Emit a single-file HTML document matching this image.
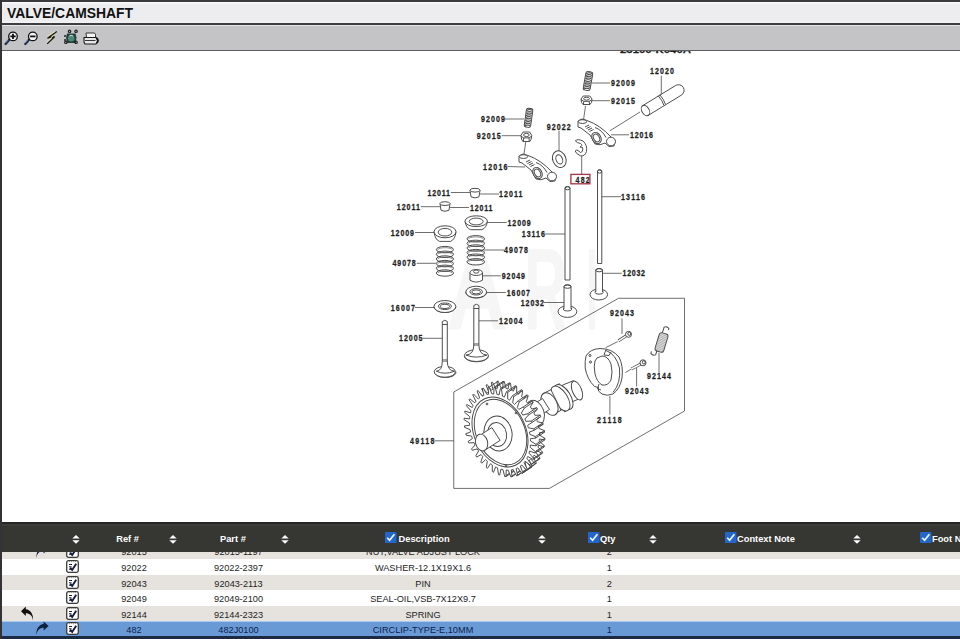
<!DOCTYPE html>
<html><head><meta charset="utf-8">
<style>
*{margin:0;padding:0;box-sizing:border-box}
html,body{width:960px;height:639px;overflow:hidden;background:#fff;font-family:"Liberation Sans",sans-serif}
.abs{position:absolute}
#topb{left:0;top:0;width:960px;height:2px;background:#3a3a3e}
#leftb{left:0;top:0;width:2px;height:639px;background:#333335}
#title{left:2px;top:2px;width:958px;height:21px;background:linear-gradient(#fbfbfc 0,#fbfbfc 1px,#ececee 2px,#ededf0 18px,#f4f4f6 21px)}
#title span{position:absolute;left:5px;top:3px;font-weight:bold;font-size:13.9px;color:#111;letter-spacing:0}
#tline{left:2px;top:23px;width:958px;height:1.6px;background:#3e3e40}
#tline2{left:2px;top:24.6px;width:958px;height:1px;background:#e8e8ea}
#tool{left:2px;top:25.5px;width:958px;height:24px;background:#c4c3c5}
#bline{left:2px;top:49.5px;width:958px;height:1.3px;background:#5e5e60}
#diag{left:2px;top:51px;width:958px;height:471px;background:#fff}
#thl{left:2px;top:522.3px;width:958px;height:2px;background:#262626}
#thl2{left:2px;top:524.3px;width:958px;height:2px;background:#3c3c3a}
#th{left:2px;top:526.3px;width:958px;height:25.5px;background:#363633;color:#fff;font-weight:bold;font-size:9.3px}
.hd{position:absolute;top:7.6px;white-space:nowrap}
.sort{position:absolute;top:8.5px;width:8px;height:9px}
.cb{position:absolute;top:5.5px;width:11.5px;height:11.5px}
#rows{left:2px;top:551.8px;width:958px;height:84px;overflow:hidden}
.row{position:absolute;left:0;width:958px;height:15.5px;font-size:9.2px;color:#1e1e1e}
.c{position:absolute;top:4px;white-space:nowrap;transform:translateX(-50%)}
.chk{position:absolute;left:64px;top:1.2px;width:13px;height:13px}
.arr{position:absolute;top:0;width:16px;height:15px}
#botl{left:2px;top:635.7px;width:958px;height:3.3px;background:#1d2a44}
#dsvg{left:0;top:0}
.lb{font-family:"Liberation Sans",sans-serif;font-weight:bold;font-size:8.2px;fill:#1e1e1e;stroke:#1e1e1e;stroke-width:0.25}
.ln{stroke:#4a4a4a;stroke-width:0.8;fill:none}
.pt{stroke:#454545;stroke-width:0.95}
.thk{stroke:#4a4a4a;stroke-width:3.0;fill:none}
.thn{stroke:#fff;stroke-width:1.5;fill:none}
</style></head><body>
<div class="abs" id="diag"></div>
<svg class="abs" id="dsvg" width="960" height="639" viewBox="0 0 960 639"><defs><clipPath id="dc"><rect x="2" y="51" width="958" height="471"/></clipPath></defs><g clip-path="url(#dc)"><g fill="#f6f6f6" font-family="Liberation Sans" font-weight="bold" font-size="116"><text x="446" y="330" textLength="62" lengthAdjust="spacingAndGlyphs">A</text><text x="524" y="330" textLength="43" lengthAdjust="spacingAndGlyphs">R</text><text x="586" y="330" textLength="12" lengthAdjust="spacingAndGlyphs">I</text></g>
<text x="620" y="52.6" textLength="71" lengthAdjust="spacingAndGlyphs" font-size="9" class="lb">23100-K040A</text>
<text transform="translate(650.00 73.90) scale(0.86 1)" x="0" y="0" textLength="27.91" lengthAdjust="spacing" class="lb">12020</text>
<text transform="translate(611.00 86.10) scale(0.86 1)" x="0" y="0" textLength="27.91" lengthAdjust="spacing" class="lb">92009</text>
<text transform="translate(611.00 103.80) scale(0.86 1)" x="0" y="0" textLength="27.91" lengthAdjust="spacing" class="lb">92015</text>
<text transform="translate(630.00 137.90) scale(0.86 1)" x="0" y="0" textLength="26.74" lengthAdjust="spacing" class="lb">12016</text>
<text transform="translate(481.00 122.10) scale(0.86 1)" x="0" y="0" textLength="27.91" lengthAdjust="spacing" class="lb">92009</text>
<text transform="translate(476.70 138.80) scale(0.86 1)" x="0" y="0" textLength="28.02" lengthAdjust="spacing" class="lb">92015</text>
<text transform="translate(546.70 129.60) scale(0.86 1)" x="0" y="0" textLength="28.02" lengthAdjust="spacing" class="lb">92022</text>
<text transform="translate(483.00 169.60) scale(0.86 1)" x="0" y="0" textLength="28.49" lengthAdjust="spacing" class="lb">12016</text>
<text transform="translate(427.50 195.60) scale(0.86 1)" x="0" y="0" textLength="26.16" lengthAdjust="spacing" class="lb">12011</text>
<text transform="translate(499.00 197.10) scale(0.86 1)" x="0" y="0" textLength="27.33" lengthAdjust="spacing" class="lb">12011</text>
<text transform="translate(396.70 209.80) scale(0.86 1)" x="0" y="0" textLength="27.09" lengthAdjust="spacing" class="lb">12011</text>
<text transform="translate(470.00 210.60) scale(0.86 1)" x="0" y="0" textLength="26.16" lengthAdjust="spacing" class="lb">12011</text>
<text transform="translate(621.00 199.80) scale(0.86 1)" x="0" y="0" textLength="27.91" lengthAdjust="spacing" class="lb">13116</text>
<text transform="translate(507.50 225.60) scale(0.86 1)" x="0" y="0" textLength="27.09" lengthAdjust="spacing" class="lb">12009</text>
<text transform="translate(390.80 235.60) scale(0.86 1)" x="0" y="0" textLength="26.98" lengthAdjust="spacing" class="lb">12009</text>
<text transform="translate(521.70 237.10) scale(0.86 1)" x="0" y="0" textLength="27.09" lengthAdjust="spacing" class="lb">13116</text>
<text transform="translate(504.00 253.10) scale(0.86 1)" x="0" y="0" textLength="27.91" lengthAdjust="spacing" class="lb">49078</text>
<text transform="translate(392.50 266.40) scale(0.86 1)" x="0" y="0" textLength="27.09" lengthAdjust="spacing" class="lb">49078</text>
<text transform="translate(622.50 276.40) scale(0.86 1)" x="0" y="0" textLength="26.16" lengthAdjust="spacing" class="lb">12032</text>
<text transform="translate(501.70 278.90) scale(0.86 1)" x="0" y="0" textLength="27.09" lengthAdjust="spacing" class="lb">92049</text>
<text transform="translate(506.70 295.60) scale(0.86 1)" x="0" y="0" textLength="27.09" lengthAdjust="spacing" class="lb">16007</text>
<text transform="translate(520.80 305.60) scale(0.86 1)" x="0" y="0" textLength="26.98" lengthAdjust="spacing" class="lb">12032</text>
<text transform="translate(390.80 310.60) scale(0.86 1)" x="0" y="0" textLength="28.14" lengthAdjust="spacing" class="lb">16007</text>
<text transform="translate(610.00 316.30) scale(0.86 1)" x="0" y="0" textLength="27.91" lengthAdjust="spacing" class="lb">92043</text>
<text transform="translate(499.00 323.90) scale(0.86 1)" x="0" y="0" textLength="27.33" lengthAdjust="spacing" class="lb">12004</text>
<text transform="translate(399.00 341.40) scale(0.86 1)" x="0" y="0" textLength="27.33" lengthAdjust="spacing" class="lb">12005</text>
<text transform="translate(647.00 379.10) scale(0.86 1)" x="0" y="0" textLength="27.91" lengthAdjust="spacing" class="lb">92144</text>
<text transform="translate(625.00 393.80) scale(0.86 1)" x="0" y="0" textLength="27.44" lengthAdjust="spacing" class="lb">92043</text>
<text transform="translate(597.00 422.50) scale(0.86 1)" x="0" y="0" textLength="28.72" lengthAdjust="spacing" class="lb">21118</text>
<text transform="translate(410.00 443.90) scale(0.86 1)" x="0" y="0" textLength="28.37" lengthAdjust="spacing" class="lb">49118</text>
<text transform="translate(575.50 182.90) scale(0.86 1)" x="0" y="0" textLength="16.63" lengthAdjust="spacing" class="lb">482</text>
<line x1="661.3" y1="75.7" x2="661.3" y2="96.5" class="ln"/>
<line x1="592.0" y1="83.0" x2="610.0" y2="83.0" class="ln"/>
<line x1="592.0" y1="100.7" x2="610.0" y2="100.7" class="ln"/>
<line x1="611.0" y1="134.8" x2="629.0" y2="134.8" class="ln"/>
<line x1="640.0" y1="112.0" x2="610.0" y2="130.7" class="ln"/>
<line x1="505.0" y1="119.0" x2="524.0" y2="119.0" class="ln"/>
<line x1="501.7" y1="135.7" x2="521.0" y2="135.7" class="ln"/>
<line x1="559.0" y1="130.7" x2="559.0" y2="151.5" class="ln"/>
<line x1="507.5" y1="166.5" x2="525.0" y2="167.0" class="ln"/>
<line x1="585.5" y1="106.0" x2="583.5" y2="120.0" class="ln"/>
<line x1="525.8" y1="141.5" x2="524.0" y2="154.0" class="ln"/>
<line x1="581.7" y1="155.7" x2="581.7" y2="174.0" class="ln"/>
<line x1="450.8" y1="192.5" x2="470.0" y2="192.5" class="ln"/>
<line x1="480.0" y1="194.0" x2="499.0" y2="194.0" class="ln"/>
<line x1="420.8" y1="206.7" x2="440.0" y2="206.7" class="ln"/>
<line x1="450.0" y1="207.5" x2="469.0" y2="207.5" class="ln"/>
<line x1="601.7" y1="196.7" x2="621.0" y2="196.7" class="ln"/>
<line x1="545.0" y1="234.0" x2="565.0" y2="234.0" class="ln"/>
<line x1="487.5" y1="222.5" x2="506.7" y2="222.5" class="ln"/>
<line x1="415.0" y1="232.5" x2="434.0" y2="232.5" class="ln"/>
<line x1="484.0" y1="250.0" x2="504.0" y2="250.0" class="ln"/>
<line x1="416.7" y1="263.3" x2="435.8" y2="263.3" class="ln"/>
<line x1="602.5" y1="273.3" x2="621.7" y2="273.3" class="ln"/>
<line x1="482.5" y1="275.8" x2="500.8" y2="275.8" class="ln"/>
<line x1="486.7" y1="292.5" x2="505.8" y2="292.5" class="ln"/>
<line x1="544.0" y1="302.5" x2="564.0" y2="302.5" class="ln"/>
<line x1="415.0" y1="307.5" x2="434.0" y2="307.5" class="ln"/>
<line x1="479.0" y1="320.8" x2="498.0" y2="320.8" class="ln"/>
<line x1="422.5" y1="338.3" x2="442.0" y2="338.3" class="ln"/>
<line x1="622.0" y1="318.4" x2="622.0" y2="334.0" class="ln"/>
<line x1="617.7" y1="341.6" x2="605.6" y2="347.7" class="ln"/>
<line x1="659.0" y1="352.8" x2="659.0" y2="372.6" class="ln"/>
<line x1="636.6" y1="367.5" x2="636.6" y2="386.4" class="ln"/>
<line x1="625.4" y1="372.6" x2="631.4" y2="369.0" class="ln"/>
<line x1="609.9" y1="396.0" x2="609.9" y2="414.7" class="ln"/>
<line x1="434.4" y1="440.8" x2="453.8" y2="440.8" class="ln"/>
<path d="M618.5,298.3 L684.5,298.3 L684.5,411 L549.4,488.4 L453.75,488.4 L453.75,392 Z" fill="none" class="ln"/>
<rect x="570.9" y="174.4" width="19.0" height="9.4" fill="none" stroke="#a53a4a" stroke-width="1.35"/>
<g transform="rotate(10 588.0 81.0)"><rect x="584.5" y="71.5" width="7.0" height="19.0" rx="2.3" fill="#f4f4f4" class="pt"/><path d="M585.0,74.2 Q588.0,71.7 591.0,73.2" class="pt" fill="none"/><path d="M585.0,76.0 Q588.0,73.5 591.0,75.0" class="pt" fill="none"/><path d="M585.0,77.7 Q588.0,75.2 591.0,76.7" class="pt" fill="none"/><path d="M585.0,79.4 Q588.0,76.9 591.0,78.4" class="pt" fill="none"/><path d="M585.0,81.1 Q588.0,78.6 591.0,80.1" class="pt" fill="none"/><path d="M585.0,82.9 Q588.0,80.4 591.0,81.9" class="pt" fill="none"/><path d="M585.0,84.6 Q588.0,82.1 591.0,83.6" class="pt" fill="none"/><path d="M585.0,86.3 Q588.0,83.8 591.0,85.3" class="pt" fill="none"/><path d="M585.0,88.0 Q588.0,85.5 591.0,87.0" class="pt" fill="none"/><path d="M585.0,89.8 Q588.0,87.3 591.0,88.8" class="pt" fill="none"/></g>
<g transform="rotate(8 528.5 117.8)"><rect x="525.3" y="108.3" width="6.5" height="19.0" rx="2.2" fill="#f4f4f4" class="pt"/><path d="M525.8,111.0 Q528.5,108.5 531.3,110.0" class="pt" fill="none"/><path d="M525.8,112.8 Q528.5,110.3 531.3,111.8" class="pt" fill="none"/><path d="M525.8,114.5 Q528.5,112.0 531.3,113.5" class="pt" fill="none"/><path d="M525.8,116.2 Q528.5,113.7 531.3,115.2" class="pt" fill="none"/><path d="M525.8,117.9 Q528.5,115.4 531.3,116.9" class="pt" fill="none"/><path d="M525.8,119.7 Q528.5,117.2 531.3,118.7" class="pt" fill="none"/><path d="M525.8,121.4 Q528.5,118.9 531.3,120.4" class="pt" fill="none"/><path d="M525.8,123.1 Q528.5,120.6 531.3,122.1" class="pt" fill="none"/><path d="M525.8,124.8 Q528.5,122.3 531.3,123.8" class="pt" fill="none"/><path d="M525.8,126.6 Q528.5,124.1 531.3,125.6" class="pt" fill="none"/></g>
<path d="M467.5,238.8 L467.5,261.8 A8.8,3.2 0 0 0 484.1,261.8 L484.1,238.8 Z" fill="#fff" stroke="none"/><ellipse cx="475.8" cy="238.8" rx="8.8" ry="3.2" fill="none" class="pt"/><path d="M468.6,238.8 A7.2,1.9 0 0 1 483.0,238.8" fill="none" class="pt" style="stroke:#5a5a5a;stroke-width:0.7"/><ellipse cx="475.8" cy="243.4" rx="8.8" ry="3.2" fill="none" class="pt"/><path d="M468.6,243.4 A7.2,1.9 0 0 1 483.0,243.4" fill="none" class="pt" style="stroke:#5a5a5a;stroke-width:0.7"/><ellipse cx="475.8" cy="248.0" rx="8.8" ry="3.2" fill="none" class="pt"/><path d="M468.6,248.0 A7.2,1.9 0 0 1 483.0,248.0" fill="none" class="pt" style="stroke:#5a5a5a;stroke-width:0.7"/><ellipse cx="475.8" cy="252.6" rx="8.8" ry="3.2" fill="none" class="pt"/><path d="M468.6,252.6 A7.2,1.9 0 0 1 483.0,252.6" fill="none" class="pt" style="stroke:#5a5a5a;stroke-width:0.7"/><ellipse cx="475.8" cy="257.2" rx="8.8" ry="3.2" fill="none" class="pt"/><path d="M468.6,257.2 A7.2,1.9 0 0 1 483.0,257.2" fill="none" class="pt" style="stroke:#5a5a5a;stroke-width:0.7"/><ellipse cx="475.8" cy="261.8" rx="8.8" ry="3.2" fill="none" class="pt"/><path d="M468.6,261.8 A7.2,1.9 0 0 1 483.0,261.8" fill="none" class="pt" style="stroke:#5a5a5a;stroke-width:0.7"/>
<path d="M436.8,249.6 L436.8,273.0 A8.6,3.2 0 0 0 453.0,273.0 L453.0,249.6 Z" fill="#fff" stroke="none"/><ellipse cx="444.9" cy="249.6" rx="8.6" ry="3.2" fill="none" class="pt"/><path d="M437.9,249.6 A7.0,1.9 0 0 1 451.9,249.6" fill="none" class="pt" style="stroke:#5a5a5a;stroke-width:0.7"/><ellipse cx="444.9" cy="254.3" rx="8.6" ry="3.2" fill="none" class="pt"/><path d="M437.9,254.3 A7.0,1.9 0 0 1 451.9,254.3" fill="none" class="pt" style="stroke:#5a5a5a;stroke-width:0.7"/><ellipse cx="444.9" cy="259.0" rx="8.6" ry="3.2" fill="none" class="pt"/><path d="M437.9,259.0 A7.0,1.9 0 0 1 451.9,259.0" fill="none" class="pt" style="stroke:#5a5a5a;stroke-width:0.7"/><ellipse cx="444.9" cy="263.6" rx="8.6" ry="3.2" fill="none" class="pt"/><path d="M437.9,263.6 A7.0,1.9 0 0 1 451.9,263.6" fill="none" class="pt" style="stroke:#5a5a5a;stroke-width:0.7"/><ellipse cx="444.9" cy="268.3" rx="8.6" ry="3.2" fill="none" class="pt"/><path d="M437.9,268.3 A7.0,1.9 0 0 1 451.9,268.3" fill="none" class="pt" style="stroke:#5a5a5a;stroke-width:0.7"/><ellipse cx="444.9" cy="273.0" rx="8.6" ry="3.2" fill="none" class="pt"/><path d="M437.9,273.0 A7.0,1.9 0 0 1 451.9,273.0" fill="none" class="pt" style="stroke:#5a5a5a;stroke-width:0.7"/>
<path d="M581.0,99.0 L583.2,96.0 L589.8,96.0 L592.0,99.0 L591.5,102.4 L590.0,104.5 L583.0,104.5 L581.5,102.4 Z" fill="#fff" class="pt"/>
<path d="M581.2,99.8 L583.8,101.3 L589.2,101.3 L591.8,99.8" fill="none" class="pt"/>
<line x1="583.8" y1="101.3" x2="583.4" y2="104.5" class="pt"/>
<line x1="589.2" y1="101.3" x2="589.6" y2="104.5" class="pt"/>
<ellipse cx="586.5" cy="98.7" rx="2.9" ry="1.4" fill="none" class="pt"/>
<path d="M521.0,135.3 L523.1,132.0 L529.6,132.0 L531.7,135.3 L531.2,139.1 L529.8,141.5 L522.9,141.5 L521.5,139.1 Z" fill="#fff" class="pt"/>
<path d="M521.2,136.3 L523.7,137.9 L529.0,137.9 L531.5,136.3" fill="none" class="pt"/>
<line x1="523.7" y1="137.9" x2="523.4" y2="141.5" class="pt"/>
<line x1="529.0" y1="137.9" x2="529.3" y2="141.5" class="pt"/>
<ellipse cx="526.4" cy="135.0" rx="2.8" ry="1.6" fill="none" class="pt"/>
<path d="M578.0,121.0 L582.0,119.0 L587.0,120.5 Q600.0,125.0 611.0,137.0 L615.0,141.0 L614.0,146.0 L609.0,146.5 L605.0,143.0 Q600.0,146.0 595.0,144.0 L590.0,135.0 L581.0,128.0 L578.0,127.0 Z" fill="#fff" class="pt"/>
<ellipse cx="596.5" cy="138.0" rx="4.3" ry="6" transform="rotate(-30 596.5 138.0)" fill="#fff" class="pt"/>
<ellipse cx="611.0" cy="141.5" rx="4.5" ry="4.3" fill="#fff" class="pt"/>
<ellipse cx="582.5" cy="121.6" rx="4.2" ry="1.9" fill="#fff" class="pt"/>
<path d="M595.0,127.5 Q602.0,130.0 606.0,137.5" fill="none" class="pt"/>
<ellipse cx="596.5" cy="138.0" rx="2.8" ry="4.2" transform="rotate(-30 596.5 138.0)" fill="none" class="pt"/>
<line x1="585.0" y1="127.0" x2="589.0" y2="125.0" class="pt"/>
<line x1="586.5" y1="128.5" x2="590.5" y2="126.5" class="pt"/>
<line x1="588.0" y1="130.0" x2="592.0" y2="128.0" class="pt"/>
<line x1="589.5" y1="131.5" x2="593.5" y2="129.5" class="pt"/>
<path d="M519.0,156.0 L523.0,154.0 L528.0,155.5 Q541.0,160.0 552.0,172.0 L556.0,176.0 L555.0,181.0 L550.0,181.5 L546.0,178.0 Q541.0,181.0 536.0,179.0 L531.0,170.0 L522.0,163.0 L519.0,162.0 Z" fill="#fff" class="pt"/>
<ellipse cx="537.5" cy="173.0" rx="4.3" ry="6" transform="rotate(-30 537.5 173.0)" fill="#fff" class="pt"/>
<ellipse cx="552.0" cy="176.5" rx="4.5" ry="4.3" fill="#fff" class="pt"/>
<ellipse cx="523.5" cy="156.6" rx="4.2" ry="1.9" fill="#fff" class="pt"/>
<path d="M536.0,162.5 Q543.0,165.0 547.0,172.5" fill="none" class="pt"/>
<ellipse cx="537.5" cy="173.0" rx="2.8" ry="4.2" transform="rotate(-30 537.5 173.0)" fill="none" class="pt"/>
<line x1="526.0" y1="162.0" x2="530.0" y2="160.0" class="pt"/>
<line x1="527.5" y1="163.5" x2="531.5" y2="161.5" class="pt"/>
<line x1="529.0" y1="165.0" x2="533.0" y2="163.0" class="pt"/>
<line x1="530.5" y1="166.5" x2="534.5" y2="164.5" class="pt"/>
<path d="M648.4,115.3 L681.4,95.1 A5.6,5.6 0 0 0 675.6,85.5 L642.6,105.7 Z" fill="#fff" class="pt"/>
<ellipse cx="645.5" cy="110.5" rx="3.6" ry="5.6" transform="rotate(-31.471684533627307 645.5 110.5)" fill="#fff" class="pt"/>
<path d="M663.9,105.3 Q662.5,100.5 658.1,95.7" fill="none" class="pt"/>
<path d="M665.5,104.3 Q664.0,99.5 659.7,94.7" fill="none" class="pt"/>
<ellipse cx="559.3" cy="159.2" rx="6.6" ry="8.6" transform="rotate(-22 559.3 159.2)" fill="#fff" class="pt"/>
<ellipse cx="559.3" cy="159.4" rx="3.2" ry="4.8" transform="rotate(-22 559.3 159.4)" fill="none" class="pt"/>
<path d="M575.3,140.8 Q578,138.5 583,141 Q587.5,145 586.5,151.5 Q585,156.5 580.5,155.8 Q576,154 575.2,151 Q576,149.5 578,150.5 L580.5,152.5 Q583,152 582.8,149 L582.5,147.5 L580,147 Q583.5,145.5 580.5,143.5 Q577,143 575.3,140.8 Z" fill="#fff" class="pt"/>
<path d="M597.5,263.5 L597.5,171.5 A2.1,1.8 0 0 1 601.8,171.5 L601.8,263.5 Z" fill="#fff" class="pt"/>
<ellipse cx="599.6" cy="171.6" rx="2.1" ry="1.5" transform="rotate(0 599.6 171.6)" fill="none" class="pt"/>
<path d="M565.0,280.0 L565.0,188.2 A2.5,1.8 0 0 1 570.0,188.2 L570.0,280.0 Z" fill="#fff" class="pt"/>
<ellipse cx="567.5" cy="188.3" rx="2.5" ry="1.5" transform="rotate(0 567.5 188.3)" fill="none" class="pt"/>
<ellipse cx="598.8" cy="294.5" rx="8.8" ry="5.5" transform="rotate(0 598.8 294.5)" fill="#fff" class="pt"/>
<ellipse cx="599.1" cy="292.2" rx="4.2" ry="2.0" transform="rotate(0 599.1 292.2)" fill="none" class="pt"/>
<path d="M595.8,292.0 L595.8,270.0 A3.4,1.8 0 0 1 602.5,270.0 L602.5,292.0" fill="#fff" class="pt"/>
<ellipse cx="599.1" cy="270.2" rx="3.4" ry="1.6" transform="rotate(0 599.1 270.2)" fill="none" class="pt"/>
<ellipse cx="567.4" cy="311.6" rx="9.4" ry="5.8" transform="rotate(0 567.4 311.6)" fill="#fff" class="pt"/>
<ellipse cx="567.5" cy="309.0" rx="4.3" ry="2.0" transform="rotate(0 567.5 309.0)" fill="none" class="pt"/>
<path d="M564.0,308.8 L564.0,286.5 A3.5,1.8 0 0 1 571.0,286.5 L571.0,308.8" fill="#fff" class="pt"/>
<ellipse cx="567.5" cy="286.7" rx="3.5" ry="1.6" transform="rotate(0 567.5 286.7)" fill="none" class="pt"/>
<path d="M470.0,190.1 L471.0,196.8 Q475.0,199.1 479.0,196.8 L480.0,190.1" fill="#fff" class="pt"/>
<ellipse cx="475.0" cy="190.2" rx="5.0" ry="1.9" transform="rotate(0 475.0 190.2)" fill="#fff" class="pt"/>
<path d="M440.0,203.5 L441.0,210.2 Q445.0,212.5 449.0,210.2 L450.0,203.5" fill="#fff" class="pt"/>
<ellipse cx="445.0" cy="203.6" rx="5.0" ry="1.9" transform="rotate(0 445.0 203.6)" fill="#fff" class="pt"/>
<path d="M465.0,221.2 Q466.0,228.0 470.6,229.7 L481.9,229.7 Q486.5,228.0 487.5,221.2" fill="#fff" class="pt"/>
<ellipse cx="476.2" cy="221.2" rx="11.2" ry="5.4" transform="rotate(0 476.2 221.2)" fill="#fff" class="pt"/>
<ellipse cx="476.2" cy="221.5" rx="7.0" ry="3.4" transform="rotate(0 476.2 221.5)" fill="none" class="pt"/>
<path d="M434.0,231.8 Q435.0,239.7 439.5,241.4 L450.5,241.4 Q455.0,239.7 456.0,231.8" fill="#fff" class="pt"/>
<ellipse cx="445.0" cy="231.8" rx="11.0" ry="6.0" transform="rotate(0 445.0 231.8)" fill="#fff" class="pt"/>
<ellipse cx="445.0" cy="232.2" rx="6.8" ry="3.8" transform="rotate(0 445.0 232.2)" fill="none" class="pt"/>
<path d="M470,272.5 L470,280.2 Q476.2,284 482.5,280.2 L482.5,272.5" fill="#fff" class="pt"/>
<ellipse cx="476.2" cy="272.5" rx="6.2" ry="3.0" transform="rotate(0 476.2 272.5)" fill="#fff" class="pt"/>
<ellipse cx="476.2" cy="271.6" rx="2.6" ry="1.6" transform="rotate(0 476.2 271.6)" fill="none" class="pt"/>
<path d="M465.8,292.0 L466.0,293.2 A10.4,5.8 0 0 0 486.5,293.2 L486.7,292.0" fill="#fff" class="pt"/>
<ellipse cx="476.2" cy="292.0" rx="10.4" ry="5.8" transform="rotate(0 476.2 292.0)" fill="#fff" class="pt"/>
<ellipse cx="476.2" cy="291.8" rx="6.3" ry="3.2" transform="rotate(0 476.2 291.8)" fill="none" class="pt"/>
<ellipse cx="476.2" cy="291.9" rx="4.4" ry="2.0" transform="rotate(0 476.2 291.9)" fill="none" class="pt"/>
<path d="M434.0,306.5 L434.2,307.7 A10.9,6.0 0 0 0 455.6,307.7 L455.8,306.5" fill="#fff" class="pt"/>
<ellipse cx="444.9" cy="306.5" rx="10.9" ry="6.0" transform="rotate(0 444.9 306.5)" fill="#fff" class="pt"/>
<ellipse cx="444.9" cy="306.3" rx="6.5" ry="3.3" transform="rotate(0 444.9 306.3)" fill="none" class="pt"/>
<ellipse cx="444.9" cy="306.4" rx="4.6" ry="2.1" transform="rotate(0 444.9 306.4)" fill="none" class="pt"/>
<path d="M464.4,355.6 L464.7,357.2 A12.0,5.9 0 0 0 488.1,357.2 L488.4,355.6" fill="#fff" class="pt"/>
<ellipse cx="476.4" cy="355.6" rx="12.0" ry="5.9" transform="rotate(0 476.4 355.6)" fill="#fff" class="pt"/>
<path d="M473.8,345.0 Q473.8,354.6 465.9,355.1 Q476.4,359.1 486.9,355.1 Q478.9,354.6 478.9,345.0 Z" fill="#fff" class="pt"/>
<path d="M473.8,345.0 L473.8,305.5 Q476.4,303.0 478.9,305.5 L478.9,345.0" fill="#fff" class="pt"/>
<line x1="473.8" y1="308.5" x2="478.9" y2="308.5" class="pt"/>
<line x1="473.8" y1="344.0" x2="478.9" y2="344.0" class="pt"/>
<path d="M434.9,371.8 L435.2,373.4 A10.6,5.4 0 0 0 455.7,373.4 L456.0,371.8" fill="#fff" class="pt"/>
<ellipse cx="444.8" cy="371.8" rx="10.6" ry="5.4" transform="rotate(0 444.8 371.8)" fill="#fff" class="pt"/>
<path d="M442.3,361.0 Q442.3,370.8 436.4,371.2 Q444.8,375.2 454.5,371.2 Q447.3,370.8 447.3,361.0 Z" fill="#fff" class="pt"/>
<path d="M442.3,361.0 L442.3,321.5 Q444.8,319.0 447.3,321.5 L447.3,361.0" fill="#fff" class="pt"/>
<line x1="442.3" y1="324.5" x2="447.3" y2="324.5" class="pt"/>
<line x1="442.3" y1="360.0" x2="447.3" y2="360.0" class="pt"/>
<path d="M628.5,334.3 L618.5,340.8" fill="none" class="thk"/>
<path d="M628.5,334.3 L618.5,340.8" fill="none" class="thn"/>
<ellipse cx="628.5" cy="334.3" rx="3.0" ry="3.0" transform="rotate(0 628.5 334.3)" fill="#fff" class="pt"/>
<ellipse cx="629.3" cy="333.8" rx="1.5" ry="1.6" transform="rotate(0 629.3 333.8)" fill="none" class="pt"/>
<path d="M643.0,362.8 L631.4,369.0" fill="none" class="thk"/>
<path d="M643.0,362.8 L631.4,369.0" fill="none" class="thn"/>
<ellipse cx="643.0" cy="362.8" rx="3.0" ry="3.0" transform="rotate(0 643.0 362.8)" fill="#fff" class="pt"/>
<ellipse cx="643.8" cy="362.3" rx="1.5" ry="1.6" transform="rotate(0 643.8 362.3)" fill="none" class="pt"/>
<g transform="rotate(17 661.5 342.5)"><rect x="657" y="333" width="9" height="19" rx="2.5" fill="#e4e4e4" class="pt"/><line x1="657.3" y1="334.5" x2="665.7" y2="335.3" class="pt" style="stroke:#888;stroke-width:0.5"/><line x1="657.3" y1="336.1" x2="665.7" y2="336.9" class="pt" style="stroke:#888;stroke-width:0.5"/><line x1="657.3" y1="337.7" x2="665.7" y2="338.5" class="pt" style="stroke:#888;stroke-width:0.5"/><line x1="657.3" y1="339.3" x2="665.7" y2="340.1" class="pt" style="stroke:#888;stroke-width:0.5"/><line x1="657.3" y1="340.9" x2="665.7" y2="341.7" class="pt" style="stroke:#888;stroke-width:0.5"/><line x1="657.3" y1="342.5" x2="665.7" y2="343.3" class="pt" style="stroke:#888;stroke-width:0.5"/><line x1="657.3" y1="344.1" x2="665.7" y2="344.9" class="pt" style="stroke:#888;stroke-width:0.5"/><line x1="657.3" y1="345.7" x2="665.7" y2="346.5" class="pt" style="stroke:#888;stroke-width:0.5"/><line x1="657.3" y1="347.3" x2="665.7" y2="348.1" class="pt" style="stroke:#888;stroke-width:0.5"/><line x1="657.3" y1="348.9" x2="665.7" y2="349.7" class="pt" style="stroke:#888;stroke-width:0.5"/><line x1="657.3" y1="350.5" x2="665.7" y2="351.3" class="pt" style="stroke:#888;stroke-width:0.5"/><path d="M659.5,333 L659.5,327 Q662,325 664.5,327 L664.5,328.5" fill="none" class="pt"/><path d="M659.5,352 L659.5,356 Q657,358 654.5,356 L654.5,354" fill="none" class="pt"/></g>
<path d="M586,356 Q590,349 600,348.5 Q612,348.5 619,357 Q623.5,366 622,378 Q620,389 613,394 Q607,396.5 602,394 L598.5,391 L598.5,387.5 L594.5,386.5 Q587,379 585.2,368 Q584.8,361 586,356 Z" fill="#fff" class="pt"/>
<path d="M606,350.5 Q616,354 619.5,368 Q621,383 613,392.5" fill="none" class="pt"/>
<path d="M597,358 L602,356 Q608,356 611,364 Q613,372 611,380 Q608,386 602,385 Q597,382 595,374 Q593.5,366 595,361 Z" fill="#fff" class="pt"/>
<path d="M599,384 L597.5,389 L601,390 M606,349.5 L604,355 L609,355.5 L611,352" fill="none" class="pt"/>
<ellipse cx="590.5" cy="362.0" rx="1.0" ry="1.1" transform="rotate(0 590.5 362.0)" fill="none" class="pt"/>
<ellipse cx="590.0" cy="355.5" rx="1.0" ry="1.1" transform="rotate(0 590.0 355.5)" fill="none" class="pt"/>
<path d="M569.6,402.8 L580.6,398.3 L573.4,380.7 L562.4,385.2 Z" fill="#fff" class="pt"/>
<ellipse cx="577.0" cy="390.5" rx="4.6" ry="10.0" transform="rotate(-22 577.0 390.5)" fill="#fff" class="pt"/>
<path d="M564.6,411.8 L572.6,407.3 L559.4,383.7 L551.4,388.2 Z" fill="#fff" class="pt"/>
<ellipse cx="563.5" cy="397.0" rx="7.0" ry="14.0" transform="rotate(-32 563.5 397.0)" fill="#fff" class="pt"/>
<ellipse cx="560.5" cy="398.5" rx="7.0" ry="14.0" transform="rotate(-32 560.5 398.5)" fill="#fff" class="pt"/>
<path d="M553.1,414.3 L561.1,410.3 L550.9,389.7 L542.9,393.7 Z" fill="#fff" class="pt"/>
<ellipse cx="549.5" cy="404.0" rx="7.3" ry="12.2" transform="rotate(-28 549.5 404.0)" fill="#fff" class="pt"/>
<path d="M535.5,418.5 L549.5,409.5 L542.5,398.5 L528.5,407.5 Z" fill="#fff" class="pt"/>
<ellipse cx="535.0" cy="413.0" rx="9.0" ry="13.0" transform="rotate(-18 535.0 413.0)" fill="#fff" class="pt"/>
<path d="M525.9,462.2 L525.1,462.6 L526.7,469.5 L525.6,469.8 L522.1,463.5 L521.2,463.7 L520.3,463.9 L521.0,470.7 L519.8,470.8 L517.1,464.1 L516.2,464.1 L515.2,464.0 L515.0,470.6 L513.7,470.4 L511.9,463.5 L510.9,463.3 L510.0,463.0 L508.7,469.1 L507.5,468.7 L506.5,461.8 L505.6,461.4 L504.6,460.9 L502.5,466.3 L501.3,465.6 L501.3,459.0 L500.4,458.4 L499.5,457.7 L496.5,462.3 L495.3,461.4 L496.3,455.2 L495.4,454.4 L494.6,453.6 L490.8,457.2 L489.8,456.1 L491.7,450.5 L490.9,449.5 L490.1,448.6 L485.7,451.1 L484.8,449.8 L487.6,445.0 L486.9,444.0 L486.2,442.9 L481.3,444.3 L480.6,442.9 L484.1,439.0 L483.6,437.9 L483.1,436.7 L477.8,436.9 L477.2,435.4 L481.4,432.6 L481.0,431.4 L480.7,430.2 L475.2,429.2 L474.8,427.7 L479.6,426.0 L479.3,424.8 L479.1,423.6 L473.6,421.4 L473.4,419.9 L478.6,419.3 L478.5,418.2 L478.5,417.0 L473.1,413.7 L473.1,412.2 L478.6,412.9 L478.7,411.8 L478.8,410.7 L473.7,406.4 L473.9,405.0 L479.5,406.9 L479.7,405.9 L480.0,404.9 L475.4,399.7 L475.8,398.5 L481.3,401.5 L481.7,400.6 L482.1,399.7 L478.0,393.8 L478.7,392.8 L483.9,396.8 L484.4,396.0 L485.0,395.3 L481.7,388.9 L482.5,388.0 L487.3,393.0 L488.0,392.4 L488.7,391.9 L486.1,385.1 L487.1,384.5 L491.3,390.2 L492.1,389.8 L492.9,389.4 L491.3,382.5 L492.4,382.2 L495.9,388.5 L496.8,388.3 L497.7,388.1 L497.0,381.3 L498.2,381.2 L500.9,387.9 L501.8,387.9 L502.8,388.0 L503.0,381.4 L504.3,381.6 L506.1,388.5 L507.1,388.7 L508.0,389.0 L509.3,382.9 L510.5,383.3 L511.5,390.2 L512.4,390.6 L513.4,391.1 L515.5,385.7 L516.7,386.4 L516.7,393.0 L517.6,393.6 L518.5,394.3 L521.5,389.7 L522.7,390.6 L521.7,396.8 L522.6,397.6 L523.4,398.4 L527.2,394.8 L528.2,395.9 L526.3,401.5 L527.1,402.5 L527.9,403.4 L532.3,400.9 L533.2,402.2 L530.4,407.0 L531.1,408.0 L531.8,409.1 L536.7,407.7 L537.4,409.1 L533.9,413.0 L534.4,414.1 L534.9,415.3 L540.2,415.1 L540.8,416.6 L536.6,419.4 L537.0,420.6 L537.3,421.8 L542.8,422.8 L543.2,424.3 L538.4,426.0 L538.7,427.2 L538.9,428.4 L544.4,430.6 L544.6,432.1 L539.4,432.7 L539.5,433.8 L539.5,435.0 L544.9,438.3 L544.9,439.8 L539.4,439.1 L539.3,440.2 L539.2,441.3 L544.3,445.6 L544.1,447.0 L538.5,445.1 L538.3,446.1 L538.0,447.1 L542.6,452.3 L542.2,453.5 L536.7,450.5 L536.3,451.4 L535.9,452.3 L540.0,458.2 L539.3,459.2 L534.1,455.2 L533.6,456.0 L533.0,456.7 L536.3,463.1 L535.5,464.0 L530.7,459.0 L530.0,459.6 L529.3,460.1 L531.9,466.9 L530.9,467.5 L526.7,461.8 Z" fill="#fff" class="pt"/>
<line x1="517.7" y1="475.5" x2="526.7" y2="469.5" class="pt"/>
<line x1="516.6" y1="475.8" x2="525.6" y2="469.8" class="pt"/>
<line x1="512.0" y1="476.7" x2="521.0" y2="470.7" class="pt"/>
<line x1="510.8" y1="476.8" x2="519.8" y2="470.8" class="pt"/>
<line x1="506.0" y1="476.6" x2="515.0" y2="470.6" class="pt"/>
<line x1="504.7" y1="476.4" x2="513.7" y2="470.4" class="pt"/>
<line x1="489.2" y1="387.2" x2="498.2" y2="381.2" class="pt"/>
<line x1="494.0" y1="387.4" x2="503.0" y2="381.4" class="pt"/>
<line x1="495.3" y1="387.6" x2="504.3" y2="381.6" class="pt"/>
<line x1="500.3" y1="388.9" x2="509.3" y2="382.9" class="pt"/>
<line x1="501.5" y1="389.3" x2="510.5" y2="383.3" class="pt"/>
<line x1="506.5" y1="391.7" x2="515.5" y2="385.7" class="pt"/>
<line x1="507.7" y1="392.4" x2="516.7" y2="386.4" class="pt"/>
<line x1="512.5" y1="395.7" x2="521.5" y2="389.7" class="pt"/>
<line x1="513.7" y1="396.6" x2="522.7" y2="390.6" class="pt"/>
<line x1="518.2" y1="400.8" x2="527.2" y2="394.8" class="pt"/>
<line x1="519.2" y1="401.9" x2="528.2" y2="395.9" class="pt"/>
<line x1="523.3" y1="406.9" x2="532.3" y2="400.9" class="pt"/>
<line x1="524.2" y1="408.2" x2="533.2" y2="402.2" class="pt"/>
<line x1="527.7" y1="413.7" x2="536.7" y2="407.7" class="pt"/>
<line x1="528.4" y1="415.1" x2="537.4" y2="409.1" class="pt"/>
<line x1="531.2" y1="421.1" x2="540.2" y2="415.1" class="pt"/>
<line x1="531.8" y1="422.6" x2="540.8" y2="416.6" class="pt"/>
<line x1="533.8" y1="428.8" x2="542.8" y2="422.8" class="pt"/>
<line x1="534.2" y1="430.3" x2="543.2" y2="424.3" class="pt"/>
<line x1="535.4" y1="436.6" x2="544.4" y2="430.6" class="pt"/>
<line x1="535.6" y1="438.1" x2="544.6" y2="432.1" class="pt"/>
<line x1="535.9" y1="444.3" x2="544.9" y2="438.3" class="pt"/>
<line x1="535.9" y1="445.8" x2="544.9" y2="439.8" class="pt"/>
<line x1="535.3" y1="451.6" x2="544.3" y2="445.6" class="pt"/>
<line x1="535.1" y1="453.0" x2="544.1" y2="447.0" class="pt"/>
<line x1="533.6" y1="458.3" x2="542.6" y2="452.3" class="pt"/>
<line x1="533.2" y1="459.5" x2="542.2" y2="453.5" class="pt"/>
<line x1="531.0" y1="464.2" x2="540.0" y2="458.2" class="pt"/>
<line x1="530.3" y1="465.2" x2="539.3" y2="459.2" class="pt"/>
<line x1="527.3" y1="469.1" x2="536.3" y2="463.1" class="pt"/>
<line x1="526.5" y1="470.0" x2="535.5" y2="464.0" class="pt"/>
<line x1="522.9" y1="472.9" x2="531.9" y2="466.9" class="pt"/>
<line x1="521.9" y1="473.5" x2="530.9" y2="467.5" class="pt"/>
<path d="M516.9,468.2 L516.1,468.6 L517.7,475.5 L516.6,475.8 L513.1,469.5 L512.2,469.7 L511.3,469.9 L512.0,476.7 L510.8,476.8 L508.1,470.1 L507.2,470.1 L506.2,470.0 L506.0,476.6 L504.7,476.4 L502.9,469.5 L501.9,469.3 L501.0,469.0 L499.7,475.1 L498.5,474.7 L497.5,467.8 L496.6,467.4 L495.6,466.9 L493.5,472.3 L492.3,471.6 L492.3,465.0 L491.4,464.4 L490.5,463.7 L487.5,468.3 L486.3,467.4 L487.3,461.2 L486.4,460.4 L485.6,459.6 L481.8,463.2 L480.8,462.1 L482.7,456.5 L481.9,455.5 L481.1,454.6 L476.7,457.1 L475.8,455.8 L478.6,451.0 L477.9,450.0 L477.2,448.9 L472.3,450.3 L471.6,448.9 L475.1,445.0 L474.6,443.9 L474.1,442.7 L468.8,442.9 L468.2,441.4 L472.4,438.6 L472.0,437.4 L471.7,436.2 L466.2,435.2 L465.8,433.7 L470.6,432.0 L470.3,430.8 L470.1,429.6 L464.6,427.4 L464.4,425.9 L469.6,425.3 L469.5,424.2 L469.5,423.0 L464.1,419.7 L464.1,418.2 L469.6,418.9 L469.7,417.8 L469.8,416.7 L464.7,412.4 L464.9,411.0 L470.5,412.9 L470.7,411.9 L471.0,410.9 L466.4,405.7 L466.8,404.5 L472.3,407.5 L472.7,406.6 L473.1,405.7 L469.0,399.8 L469.7,398.8 L474.9,402.8 L475.4,402.0 L476.0,401.3 L472.7,394.9 L473.5,394.0 L478.3,399.0 L479.0,398.4 L479.7,397.9 L477.1,391.1 L478.1,390.5 L482.3,396.2 L483.1,395.8 L483.9,395.4 L482.3,388.5 L483.4,388.2 L486.9,394.5 L487.8,394.3 L488.7,394.1 L488.0,387.3 L489.2,387.2 L491.9,393.9 L492.8,393.9 L493.8,394.0 L494.0,387.4 L495.3,387.6 L497.1,394.5 L498.1,394.7 L499.0,395.0 L500.3,388.9 L501.5,389.3 L502.5,396.2 L503.4,396.6 L504.4,397.1 L506.5,391.7 L507.7,392.4 L507.7,399.0 L508.6,399.6 L509.5,400.3 L512.5,395.7 L513.7,396.6 L512.7,402.8 L513.6,403.6 L514.4,404.4 L518.2,400.8 L519.2,401.9 L517.3,407.5 L518.1,408.5 L518.9,409.4 L523.3,406.9 L524.2,408.2 L521.4,413.0 L522.1,414.0 L522.8,415.1 L527.7,413.7 L528.4,415.1 L524.9,419.0 L525.4,420.1 L525.9,421.3 L531.2,421.1 L531.8,422.6 L527.6,425.4 L528.0,426.6 L528.3,427.8 L533.8,428.8 L534.2,430.3 L529.4,432.0 L529.7,433.2 L529.9,434.4 L535.4,436.6 L535.6,438.1 L530.4,438.7 L530.5,439.8 L530.5,441.0 L535.9,444.3 L535.9,445.8 L530.4,445.1 L530.3,446.2 L530.2,447.3 L535.3,451.6 L535.1,453.0 L529.5,451.1 L529.3,452.1 L529.0,453.1 L533.6,458.3 L533.2,459.5 L527.7,456.5 L527.3,457.4 L526.9,458.3 L531.0,464.2 L530.3,465.2 L525.1,461.2 L524.6,462.0 L524.0,462.7 L527.3,469.1 L526.5,470.0 L521.7,465.0 L521.0,465.6 L520.3,466.1 L522.9,472.9 L521.9,473.5 L517.7,467.8 Z" fill="#fff" class="pt"/>
<ellipse cx="500.0" cy="432.0" rx="36.7" ry="25.7" transform="rotate(65 500.0 432.0)" fill="none" class="pt"/>
<ellipse cx="500.5" cy="432.0" rx="34.3" ry="24.1" transform="rotate(65 500.5 432.0)" fill="none" class="pt"/>
<ellipse cx="498.0" cy="433.5" rx="14.0" ry="17.5" transform="rotate(-10 498.0 433.5)" fill="#fff" class="pt"/>
<ellipse cx="497.0" cy="434.5" rx="9.5" ry="12.0" transform="rotate(-10 497.0 434.5)" fill="none" class="pt"/>
<path d="M486.1,449.4 L500.1,440.4 L491.9,427.6 L477.9,436.6 Z" fill="#fff" class="pt"/>
<ellipse cx="481.6" cy="442.5" rx="6.0" ry="8.5" transform="rotate(-15 481.6 442.5)" fill="#fff" class="pt"/>
<ellipse cx="516.0" cy="413.0" rx="0.9" ry="0.9" transform="rotate(0 516.0 413.0)" fill="none" class="pt"/>
<ellipse cx="506.0" cy="466.0" rx="0.9" ry="0.9" transform="rotate(0 506.0 466.0)" fill="none" class="pt"/>
<ellipse cx="487.0" cy="404.0" rx="0.9" ry="0.9" transform="rotate(0 487.0 404.0)" fill="none" class="pt"/></g></svg><div class="abs" id="title"><span>VALVE/CAMSHAFT</span></div>
<div class="abs" id="tline"></div><div class="abs" id="tline2"></div>
<div class="abs" id="tool">
<svg style="position:absolute;left:0;top:0" width="120" height="24" viewBox="2 25.5 120 24">
 <g>
  <line x1="9.3" y1="39.2" x2="5.6" y2="43.5" stroke="#1a2a48" stroke-width="2.3" stroke-linecap="round"/>
  <line x1="8.2" y1="39.6" x2="5.4" y2="42.6" stroke="#8fb0e0" stroke-width="0.6"/>
  <circle cx="13" cy="35.9" r="4.3" fill="#f4f4f4" stroke="#111" stroke-width="1.3"/>
  <path d="M10.3,35.9 H15.7 M13,33.2 V38.6" stroke="#111" stroke-width="1.8"/>
  <line x1="29" y1="39.2" x2="25.3" y2="43.5" stroke="#1a2a48" stroke-width="2.3" stroke-linecap="round"/>
  <line x1="27.9" y1="39.6" x2="25.1" y2="42.6" stroke="#8fb0e0" stroke-width="0.6"/>
  <circle cx="32.8" cy="35.9" r="4.3" fill="#f4f4f4" stroke="#111" stroke-width="1.3"/>
  <path d="M30.1,35.9 H35.5" stroke="#111" stroke-width="1.8"/>
  <path d="M56.8,31 L47.5,37.6 L54.6,36.2 L47.2,43.4" stroke="#1b1b10" stroke-width="1.3" fill="none" stroke-linejoin="bevel"/>
  <path d="M55.2,30.8 L46.8,36.6 M53,35.5 L46.6,41.4" stroke="#eef0b0" stroke-width="0.8"/>
  <path d="M67,33 L75.5,33 L76.5,37 L75.5,42.5 L67,42.5 L66,37 Z" fill="#22403a"/>
  <circle cx="71.2" cy="37.8" r="3.3" fill="#4f8476"/>
  <path d="M69.5,35.5 Q71,34 73,35.5" stroke="#e8f0ee" stroke-width="0.9" fill="none"/>
  <path d="M69.5,32 a1.2,1.2 0 1 1 0.1,0 M76,32 a1.2,1.2 0 1 1 0.1,0 M76,43 a1.2,1.2 0 1 1 0.1,0 M65.8,43 a1.2,1.2 0 1 1 0.1,0" stroke="#222" stroke-width="1.2" fill="none"/>
  <path d="M64,35.5 L66,35.5 M64,39.5 L66,39.5" stroke="#222" stroke-width="1.6"/>
  <path d="M86,32.5 L94.5,32.5 L95.5,34 L95.5,37 L86.5,37 Z" fill="#f4f4f4" stroke="#222" stroke-width="0.9"/>
  <path d="M84,37 L96,37 Q98.5,38.5 97.5,41 L96,43.5 L85,43.5 L84,41.5 Z" fill="#e6e6e6" stroke="#1a1a1a" stroke-width="1.1"/>
  <path d="M85,40 H95.5" stroke="#222" stroke-width="0.9"/>
  <path d="M96.2,37.5 Q99,39.5 97,42.5" stroke="#111" stroke-width="1.8" fill="none"/>
 </g>
</svg></div>
<div class="abs" id="bline"></div>
<div class="abs" id="thl"></div><div class="abs" id="thl2"></div>
<div class="abs" id="th"><svg class="sort" style="left:70.4px" viewBox="0 0 8 9"><path d="M0.3,3.6 L4,0 L7.7,3.6 Z M0.3,5.2 L4,8.8 L7.7,5.2 Z" fill="#fff"/></svg><div class="hd" style="left:114.2px">Ref #</div><svg class="sort" style="left:166.5px" viewBox="0 0 8 9"><path d="M0.3,3.6 L4,0 L7.7,3.6 Z M0.3,5.2 L4,8.8 L7.7,5.2 Z" fill="#fff"/></svg><div class="hd" style="left:218px">Part #</div><svg class="sort" style="left:279px" viewBox="0 0 8 9"><path d="M0.3,3.6 L4,0 L7.7,3.6 Z M0.3,5.2 L4,8.8 L7.7,5.2 Z" fill="#fff"/></svg><svg class="cb" style="left:383px" viewBox="0 0 12 12"><rect x="0" y="0" width="12" height="12" rx="1" fill="#2466cc"/><path d="M2.3,6 L4.8,8.6 L9.8,2.4" stroke="#e8f6ff" stroke-width="1.8" fill="none"/></svg><div class="hd" style="left:396.5px">Description</div><svg class="sort" style="left:536px" viewBox="0 0 8 9"><path d="M0.3,3.6 L4,0 L7.7,3.6 Z M0.3,5.2 L4,8.8 L7.7,5.2 Z" fill="#fff"/></svg><svg class="cb" style="left:586px" viewBox="0 0 12 12"><rect x="0" y="0" width="12" height="12" rx="1" fill="#2466cc"/><path d="M2.3,6 L4.8,8.6 L9.8,2.4" stroke="#e8f6ff" stroke-width="1.8" fill="none"/></svg><div class="hd" style="left:598px">Qty</div><svg class="sort" style="left:647px" viewBox="0 0 8 9"><path d="M0.3,3.6 L4,0 L7.7,3.6 Z M0.3,5.2 L4,8.8 L7.7,5.2 Z" fill="#fff"/></svg><svg class="cb" style="left:723px" viewBox="0 0 12 12"><rect x="0" y="0" width="12" height="12" rx="1" fill="#2466cc"/><path d="M2.3,6 L4.8,8.6 L9.8,2.4" stroke="#e8f6ff" stroke-width="1.8" fill="none"/></svg><div class="hd" style="left:735px">Context Note</div><svg class="sort" style="left:851px" viewBox="0 0 8 9"><path d="M0.3,3.6 L4,0 L7.7,3.6 Z M0.3,5.2 L4,8.8 L7.7,5.2 Z" fill="#fff"/></svg><svg class="cb" style="left:918px" viewBox="0 0 12 12"><rect x="0" y="0" width="12" height="12" rx="1" fill="#2466cc"/><path d="M2.3,6 L4.8,8.6 L9.8,2.4" stroke="#e8f6ff" stroke-width="1.8" fill="none"/></svg><div class="hd" style="left:930px">Foot Note</div></div>
<div class="abs" id="rows"><div class="row" style="top:-8.05px;background:#e6e3df;color:#1e1e1e"><svg class="arr" style="left:32px" viewBox="0 0 16 15"><path d="M2.5,14 C3,9 6,6.8 9.6,6.8 L9.6,9.6 L14.6,5 L9.6,0.5 L9.6,3 C5.5,3.4 1.8,7.5 2.5,14 Z" fill="#10203e"/></svg><svg class="chk" viewBox="0 0 13 13"><rect x="0.7" y="0.7" width="11.6" height="11.6" rx="1.8" fill="#fff" stroke="#3a3a3a" stroke-width="1.3"/><path d="M3,1.6 H10" stroke="#888" stroke-width="0.8" stroke-dasharray="1 1"/><path d="M3,4.5 H6 M3,6.8 H5.5 M3,9.2 H5" stroke="#223" stroke-width="1.1"/><path d="M4.2,7.6 L6.2,10 L10.2,3.8" stroke="#141a40" stroke-width="1.9" fill="none"/></svg><span class="c" style="top:3px;left:132px">92015</span><span class="c" style="top:3px;left:236.5px">92015-1197</span><span class="c" style="top:3px;left:421px">NUT,VALVE ADJUST LOCK</span><span class="c" style="top:3px;left:607.3px">2</span></div><div class="row" style="top:7.40px;background:#ffffff;color:#1e1e1e"><svg class="chk" viewBox="0 0 13 13"><rect x="0.7" y="0.7" width="11.6" height="11.6" rx="1.8" fill="#fff" stroke="#3a3a3a" stroke-width="1.3"/><path d="M3,1.6 H10" stroke="#888" stroke-width="0.8" stroke-dasharray="1 1"/><path d="M3,4.5 H6 M3,6.8 H5.5 M3,9.2 H5" stroke="#223" stroke-width="1.1"/><path d="M4.2,7.6 L6.2,10 L10.2,3.8" stroke="#141a40" stroke-width="1.9" fill="none"/></svg><span class="c" style="left:132px">92022</span><span class="c" style="left:236.5px">92022-2397</span><span class="c" style="left:421px">WASHER-12.1X19X1.6</span><span class="c" style="left:607.3px">1</span></div><div class="row" style="top:22.85px;background:#e6e3df;color:#1e1e1e"><svg class="chk" viewBox="0 0 13 13"><rect x="0.7" y="0.7" width="11.6" height="11.6" rx="1.8" fill="#fff" stroke="#3a3a3a" stroke-width="1.3"/><path d="M3,1.6 H10" stroke="#888" stroke-width="0.8" stroke-dasharray="1 1"/><path d="M3,4.5 H6 M3,6.8 H5.5 M3,9.2 H5" stroke="#223" stroke-width="1.1"/><path d="M4.2,7.6 L6.2,10 L10.2,3.8" stroke="#141a40" stroke-width="1.9" fill="none"/></svg><span class="c" style="left:132px">92043</span><span class="c" style="left:236.5px">92043-2113</span><span class="c" style="left:421px">PIN</span><span class="c" style="left:607.3px">2</span></div><div class="row" style="top:38.30px;background:#ffffff;color:#1e1e1e"><svg class="chk" viewBox="0 0 13 13"><rect x="0.7" y="0.7" width="11.6" height="11.6" rx="1.8" fill="#fff" stroke="#3a3a3a" stroke-width="1.3"/><path d="M3,1.6 H10" stroke="#888" stroke-width="0.8" stroke-dasharray="1 1"/><path d="M3,4.5 H6 M3,6.8 H5.5 M3,9.2 H5" stroke="#223" stroke-width="1.1"/><path d="M4.2,7.6 L6.2,10 L10.2,3.8" stroke="#141a40" stroke-width="1.9" fill="none"/></svg><span class="c" style="left:132px">92049</span><span class="c" style="left:236.5px">92049-2100</span><span class="c" style="left:421px">SEAL-OIL,VSB-7X12X9.7</span><span class="c" style="left:607.3px">1</span></div><div class="row" style="top:53.75px;background:#e6e3df;color:#1e1e1e"><svg class="arr" style="left:17px" viewBox="0 0 16 15"><path d="M14,14.5 C13.5,9.5 10.5,7.2 6.8,7.2 L6.8,10 L2,5.2 L6.8,0.6 L6.8,3.3 C11,3.6 14.8,8 14,14.5 Z" fill="#111"/></svg><svg class="chk" viewBox="0 0 13 13"><rect x="0.7" y="0.7" width="11.6" height="11.6" rx="1.8" fill="#fff" stroke="#3a3a3a" stroke-width="1.3"/><path d="M3,1.6 H10" stroke="#888" stroke-width="0.8" stroke-dasharray="1 1"/><path d="M3,4.5 H6 M3,6.8 H5.5 M3,9.2 H5" stroke="#223" stroke-width="1.1"/><path d="M4.2,7.6 L6.2,10 L10.2,3.8" stroke="#141a40" stroke-width="1.9" fill="none"/></svg><span class="c" style="left:132px">92144</span><span class="c" style="left:236.5px">92144-2323</span><span class="c" style="left:421px">SPRING</span><span class="c" style="left:607.3px">1</span></div><div class="row" style="top:69.20px;background:#6a9ad6;color:#0e1f4e"><div style="position:absolute;left:0;top:0;width:958px;height:1.4px;background:#a9c9f2"></div><svg class="arr" style="left:32px" viewBox="0 0 16 15"><path d="M2.5,14 C3,9 6,6.8 9.6,6.8 L9.6,9.6 L14.6,5 L9.6,0.5 L9.6,3 C5.5,3.4 1.8,7.5 2.5,14 Z" fill="#10203e"/></svg><svg class="chk" viewBox="0 0 13 13"><rect x="0.7" y="0.7" width="11.6" height="11.6" rx="1.8" fill="#fff" stroke="#3a3a3a" stroke-width="1.3"/><path d="M3,1.6 H10" stroke="#888" stroke-width="0.8" stroke-dasharray="1 1"/><path d="M3,4.5 H6 M3,6.8 H5.5 M3,9.2 H5" stroke="#223" stroke-width="1.1"/><path d="M4.2,7.6 L6.2,10 L10.2,3.8" stroke="#141a40" stroke-width="1.9" fill="none"/></svg><span class="c" style="left:132px">482</span><span class="c" style="left:236.5px">482J0100</span><span class="c" style="left:421px">CIRCLIP-TYPE-E,10MM</span><span class="c" style="left:607.3px">1</span></div></div>
<div class="abs" id="botl"></div>
<div class="abs" id="topb"></div>
<div class="abs" id="leftb"></div>
</body></html>
